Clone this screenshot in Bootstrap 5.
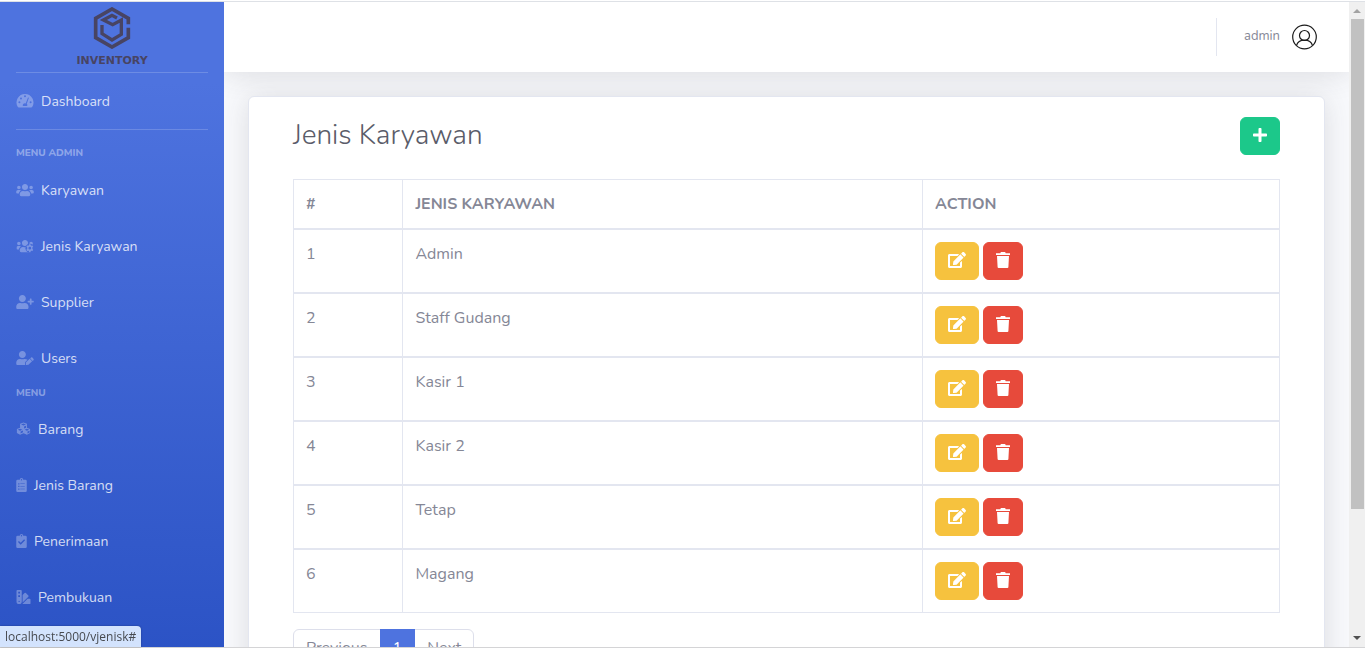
<!DOCTYPE html>
<html lang="id">
<head>
<meta charset="utf-8">
<meta name="viewport" content="width=device-width, initial-scale=1">
<title>Inventory - Jenis Karyawan</title>
<link href="https://cdn.jsdelivr.net/npm/bootstrap@5.3.0/dist/css/bootstrap.min.css" rel="stylesheet">
<style>
  body { font-family: Nunito, "Open Sans", sans-serif; color: #858796; background: #fff; }
  .app-shell { border-top: 1px solid #dee1e6; margin-top: 1px; height: calc(100vh - 1px); border-bottom: 1px solid #d4d4d6; }
  .side-panel { width: 224px; background: linear-gradient(180deg, #4e73df 10%, #224abe 100%) 0 0 / 100% 806px no-repeat #224abe; }
  .brand { height: 70px; padding-top: 5px; color: #484463; }
  .brand:hover { color: #484463; }
  .brand-name { font: bold 11px/12px "DejaVu Sans", sans-serif; margin-top: 6px; }
  .side-line { height: 1px; margin: 0 16px; background: rgba(255,255,255,.18); }
  .side-title { font-size: 10px; line-height: 15px; font-weight: 800; color: rgba(255,255,255,.4); padding: 0 16px; text-transform: uppercase; }
  .side-group { padding-top: 1px; }
  .side-link { display: flex; align-items: center; gap: 7px; height: 56px; padding: 0 16px; font-size: 14px; color: rgba(255,255,255,.8); text-decoration: none; }
  .side-link:hover { color: #fff; }
  .side-link svg { height: 14px; fill: rgba(255,255,255,.3); flex: none; }
  .top-bar { height: 70px; background: #fff; box-shadow: 0 2px 28px rgba(58,59,69,.15); padding-right: 32px; }
  .top-split { width: 1px; height: 38px; background: #e3e6f0; margin-right: 27px; }
  .user-link { font-size: 13px; color: #858796; text-decoration: none; gap: 12px; }
  .work-area { background: #f8f9fc; min-width: 0; }
  .panel { border: 1px solid #e3e6f0; border-radius: 6px; box-shadow: 0 2px 28px rgba(58,59,69,.15); padding: 20px 44px; margin: 24px; background: #fff; }
  .panel h1 { font-size: 28px; line-height: 36px; font-weight: 300; color: #5a5c69; }
  .grid-table { width: 100%; table-layout: fixed; border-collapse: separate; border-spacing: 0; border-right: 1px solid #e3e6f0; margin-bottom: 16px; }
  .grid-table th, .grid-table td { border: 1px solid #e3e6f0; border-right: 0; padding: 12px; vertical-align: top; line-height: 24px; }
  .grid-table td { height: 64px; }
  .btn { height: 38px; border: 1px solid; border-radius: 6px; padding: 0 12px 2px; display: flex; align-items: center; }
  .btn svg { fill: #fff; height: 16px; }
  .btn-add { background: #1cc88a; border-color: #1cc88a; }
  .btn-edit { background: #f6c23e; border-color: #f6c23e; }
  .btn-del { background: #e74a3b; border-color: #e74a3b; }
  .page-link { color: #858796; border-color: #dddfeb; }
  .active > .page-link { background: #4e73df; border-color: #4e73df; }
  .scroll-track { width: 16px; background: #f0f0f0; padding-right: 1px; }
  .scroll-track svg { width: 14px; height: 16px; }
  .scroll-thumb { width: 13px; height: 76%; background: #c1c1c1; margin-left: 2px; margin-top: 1px; }
  .link-status { position: fixed; left: 0; bottom: 1px; height: 21px; padding: 0 5px; background: #d3e3fd; color: #474a50; font: 12px/21px "Open Sans", sans-serif; border-radius: 0 4px 0 0; box-shadow: 0 0 2px rgba(0,0,0,.35); }
</style>
</head>
<body class="overflow-hidden">
<svg class="position-absolute" width="0" height="0" aria-hidden="true">
  <symbol id="i-gauge" viewBox="0 0 18 14"><path fill-rule="evenodd" d="M9 0a8.5 8.5 0 0 0-7.300 12.800q.4.7 1.100.7h12.400q.7 0 1.100-.7A8.500 8.500 0 0 0 9 0ZM9 1.300a1 1 0 1 1 0 2 1 1 0 0 1 0-2ZM3.400 7.300a1 1 0 1 1 0 2 1 1 0 0 1 0-2ZM5 3.500a1 1 0 1 1 0 2 1 1 0 0 1 0-2ZM14.600 7.300a1 1 0 1 1 0 2 1 1 0 0 1 0-2ZM12 3.400l.9.400-2.100 6a2 2 0 0 1 .3 2.200H6.900a2.100 2.100 0 0 1 2.800-2.600Z"/></symbol>
  <symbol id="i-users" viewBox="0 0 640 512"><path d="M96 224c35.300 0 64-28.700 64-64s-28.700-64-64-64-64 28.700-64 64 28.700 64 64 64zm448 0c35.300 0 64-28.700 64-64s-28.700-64-64-64-64 28.700-64 64 28.700 64 64 64zm32 32h-64c-17.600 0-33.500 7.100-45.100 18.600 40.300 22.100 68.900 62 75.100 109.400h66c17.700 0 32-14.300 32-32v-32c0-35.300-28.700-64-64-64zm-256 0c61.900 0 112-50.100 112-112S381.900 32 320 32 208 82.100 208 144s50.100 112 112 112zm76.800 32h-8.300c-20.800 10-43.900 16-68.500 16s-47.600-6-68.500-16h-8.300C179.600 288 128 339.600 128 403.200V432c0 26.500 21.500 48 48 48h288c26.500 0 48-21.500 48-48v-28.800c0-63.600-51.600-115.200-115.200-115.200zm-223.700-13.400C161.500 263.100 145.600 256 128 256H64c-35.300 0-64 28.700-64 64v32c0 17.700 14.300 32 32 32h65.900c6.300-47.400 34.900-87.300 75.200-109.400z"/></symbol>
  <mask id="m-gear" maskUnits="userSpaceOnUse" x="0" y="0" width="640" height="512"><path fill="#fff" d="M0 0h640v512H0z"/><circle cx="496" cy="336" r="160" fill="#000"/></mask>
  <symbol id="i-users-gear" viewBox="0 0 640 512"><path mask="url(#m-gear)" d="M96 224c35 0 64-29 64-64s-29-64-64-64-64 29-64 64 29 64 64 64zm448 0c35 0 64-29 64-64s-29-64-64-64-64 29-64 64 29 64 64 64zM320 256c62 0 112-50 112-112S382 32 320 32 208 82 208 144s50 112 112 112zM128 403v29c0 26 21 48 48 48h288V288h-75q-69 32-138 0h-8c-64 0-115 52-115 115zM173 275c-12-12-27-19-45-19H64c-35 0-64 29-64 64v32c0 18 14 32 32 32h66c6-47 35-87 75-109z"/><path fill-rule="evenodd" d="m470 192h52l8 38 28 16 37-12 26 45-29 26v62l29 26-26 45-37-12-28 16-8 38h-52l-8-38-28-16-37 12-26-45 29-26v-62l-29-26 26-45 37 12 28-16Zm26 94a50 50 0 1 0 0 100 50 50 0 0 0 0-100Z"/></symbol>
  <symbol id="i-user-plus" viewBox="0 0 640 512"><path d="M624 208h-64v-64c0-8.800-7.200-16-16-16h-32c-8.800 0-16 7.200-16 16v64h-64c-8.800 0-16 7.200-16 16v32c0 8.800 7.200 16 16 16h64v64c0 8.800 7.200 16 16 16h32c8.800 0 16-7.200 16-16v-64h64c8.800 0 16-7.200 16-16v-32c0-8.800-7.200-16-16-16zM224 256c70.700 0 128-57.300 128-128S294.700 0 224 0 96 57.300 96 128s57.300 128 128 128zm89.600 32h-16.700c-22.200 10.200-46.900 16-72.900 16s-50.600-5.800-72.900-16h-16.700C60.200 288 0 348.200 0 422.400V464c0 26.500 21.500 48 48 48h352c26.500 0 48-21.500 48-48v-41.600c0-74.200-60.200-134.400-134.400-134.400z"/></symbol>
  <symbol id="i-user-edit" viewBox="0 0 640 512"><path d="M224 256c70.700 0 128-57.300 128-128S294.700 0 224 0 96 57.300 96 128s57.300 128 128 128zm90 32h-17q-73 33-146 0h-17C60 288 0 348 0 422v42c0 26 21 48 48 48h279q-8-12-6-29l9-82 84-83q-42-30-100-30zM358 413l-8 79q0 20 18 20l79-9 131-130-90-90zM628 279l-48-47q-12-12-26 0l-44 44 90 90 28-28q24-30 0-59z"/></symbol>
  <symbol id="i-cubes" viewBox="0 0 512 512"><path fill-rule="evenodd" d="M256 16 130 60v150L14 256v144l116 64 126-56 126 56 116-64V256l-116-46V60ZM166 91l90-33 90 33-90 36ZM276 161l72-28v76l-72 30ZM48 281l82-33 84 33-84 35ZM150 351l86-36v64l-86 38ZM298 281l84-33 82 33-82 35ZM402 351l76-34v66l-76 40Z"/></symbol>
  <symbol id="i-list" viewBox="0 0 384 512"><path fill-rule="evenodd" d="M336 64h-80a64 64 0 0 0-128 0H48Q0 64 0 112v352q0 48 48 48h288q48 0 48-48V112q0-48-48-48ZM192 40a24 24 0 1 1 0 48 24 24 0 0 1 0-48ZM72 190h44v44H72ZM148 202h164v20H148ZM72 286h44v44H72ZM148 298h164v20H148ZM72 382h44v44H72ZM148 394h164v20H148Z"/></symbol>
  <symbol id="i-check" viewBox="0 0 384 512"><path fill-rule="evenodd" d="M336 64h-80a64 64 0 0 0-128 0H48Q0 64 0 112v352q0 48 48 48h288q48 0 48-48V112q0-48-48-48ZM192 40a24 24 0 1 1 0 48 24 24 0 0 1 0-48ZM64 290l34-34 65 64 125-124 34 34-159 160Z"/></symbol>
  <symbol id="i-swatch" viewBox="0 0 512 512"><path fill-rule="evenodd" d="M32 0h128q32 0 32 32v384a96 96 0 0 1-192 0V32Q0 0 32 0ZM64 64v64h64V64ZM64 192v64h64v-64ZM96 392a24 24 0 1 0 0 48 24 24 0 0 0 0-48ZM224 185l73-73q22-22 45 0l91 91q22 22 0 45L223 458ZM480 320q32 0 32 32v128q0 32-32 32H214l192-192Z"/></symbol>
  <symbol id="i-plus" viewBox="0 0 448 512"><path d="M416 208H272V64c0-17.670-14.330-32-32-32h-32c-17.670 0-32 14.330-32 32v144H32c-17.670 0-32 14.330-32 32v32c0 17.670 14.330 32 32 32h144v144c0 17.670 14.330 32 32 32h32c17.670 0 32-14.330 32-32V304h144c17.670 0 32-14.330 32-32v-32c0-17.670-14.330-32-32-32z"/></symbol>
  <symbol id="i-edit" viewBox="0 0 576 512"><path d="M402.600 83.200l90.200 90.200c3.800 3.800 3.800 10 0 13.800L274.400 405.600l-92.800 10.300c-12.400 1.400-22.900-9.100-21.500-21.500l10.300-92.800L388.800 83.200c3.800-3.800 10-3.800 13.800 0zm162-22.900l-48.800-48.800c-15.200-15.200-39.900-15.200-55.200 0l-35.400 35.400c-3.800 3.800-3.800 10 0 13.800l90.200 90.200c3.800 3.800 10 3.800 13.800 0l35.400-35.400c15.200-15.300 15.200-40 0-55.200zM384 346.200V448H64V128h229.800c3.200 0 6.200-1.300 8.500-3.500l40-40c7.600-7.600 2.200-20.500-8.500-20.500H48C21.500 64 0 85.500 0 112v352c0 26.500 21.500 48 48 48h352c26.500 0 48-21.500 48-48V306.200c0-10.700-12.900-16-20.500-8.500l-40 40c-2.200 2.300-3.500 5.300-3.500 8.500z"/></symbol>
  <symbol id="i-trash" viewBox="0 0 14 16"><path d="M0 1.200h4.300L4.700.3Q4.800 0 5.200 0h3.600q.4 0 .5.300l.4.900H14V3H0ZM1 4h12l-.6 11q0 1-1 1H2.600q-1 0-1-1Z"/></symbol>
</svg>

<div class="app-shell d-flex overflow-hidden">
  <nav class="side-panel flex-shrink-0 overflow-hidden" aria-label="Menu utama">
    <a href="#" class="brand d-flex flex-column align-items-center text-decoration-none">
      <svg width="38" height="42" viewBox="82 16 112 126" fill="none" stroke="currentColor" stroke-width="11" aria-hidden="true"><path d="M187 68V50L138 22 89 50v58l49 28 49-28V78"/><path d="m153 49-15-8-26 14 28 14 26-14v43l-28 17-30-19V70" stroke-width="10"/></svg>
      <span class="brand-name">INVENTORY</span>
    </a>
    <div class="side-line"></div>
    <a class="side-link" href="#"><svg width="18"><use href="#i-gauge"/></svg>Dashboard</a>
    <div class="side-line"></div>
    <div class="side-title pt-3">Menu Admin</div>
    <div class="side-group">
      <a class="side-link" href="#"><svg width="18"><use href="#i-users"/></svg>Karyawan</a>
      <a class="side-link" href="#"><svg width="18"><use href="#i-users-gear"/></svg>Jenis Karyawan</a>
      <a class="side-link" href="#"><svg width="18"><use href="#i-user-plus"/></svg>Supplier</a>
      <a class="side-link" href="#"><svg width="18"><use href="#i-user-edit"/></svg>Users</a>
    </div>
    <div class="side-title">Menu</div>
    <a class="side-link" href="#"><svg width="15"><use href="#i-cubes"/></svg>Barang</a>
    <a class="side-link" href="#"><svg width="11"><use href="#i-list"/></svg>Jenis Barang</a>
    <a class="side-link" href="#"><svg width="11"><use href="#i-check"/></svg>Penerimaan</a>
    <a class="side-link" href="#"><svg width="15"><use href="#i-swatch"/></svg>Pembukuan</a>
  </nav>

  <div class="work-area flex-grow-1 overflow-hidden">
    <header class="top-bar d-flex justify-content-end align-items-center">
      <div class="top-split"></div>
      <a href="#" class="user-link d-flex align-items-center"><span>admin</span>
        <svg width="25" height="26" viewBox="0 0 25 26" fill="none" stroke="#1c1c1c" stroke-width="1.200" role="img" aria-label="Profil"><circle cx="12.500" cy="13" r="11.800"/><circle cx="12.500" cy="11.500" r="5"/><path d="M4.500 21.500c1-3.500 4-5.300 8-5.300s7 1.800 8 5.300"/></svg></a>
    </header>
    <main class="panel">
      <div class="d-flex justify-content-between align-items-start mb-4">
        <h1 class="m-0">Jenis Karyawan</h1>
        <button type="button" class="btn btn-add" aria-label="Tambah"><svg width="14"><use href="#i-plus"/></svg></button>
      </div>
      <table class="grid-table">
        <colgroup><col style="width:11.100%"><col style="width:52.700%"><col></colgroup>
        <thead><tr><th scope="col">#</th><th scope="col">JENIS KARYAWAN</th><th scope="col">ACTION</th></tr></thead>
        <tbody>
          <tr><td>1</td><td>Admin</td><td><div class="d-flex gap-1"><button type="button" class="btn btn-edit" aria-label="Ubah Admin"><svg width="18"><use href="#i-edit"/></svg></button><button type="button" class="btn btn-del" aria-label="Hapus Admin"><svg width="14"><use href="#i-trash"/></svg></button></div></td></tr>
          <tr><td>2</td><td>Staff Gudang</td><td><div class="d-flex gap-1"><button type="button" class="btn btn-edit" aria-label="Ubah Staff Gudang"><svg width="18"><use href="#i-edit"/></svg></button><button type="button" class="btn btn-del" aria-label="Hapus Staff Gudang"><svg width="14"><use href="#i-trash"/></svg></button></div></td></tr>
          <tr><td>3</td><td>Kasir 1</td><td><div class="d-flex gap-1"><button type="button" class="btn btn-edit" aria-label="Ubah Kasir 1"><svg width="18"><use href="#i-edit"/></svg></button><button type="button" class="btn btn-del" aria-label="Hapus Kasir 1"><svg width="14"><use href="#i-trash"/></svg></button></div></td></tr>
          <tr><td>4</td><td>Kasir 2</td><td><div class="d-flex gap-1"><button type="button" class="btn btn-edit" aria-label="Ubah Kasir 2"><svg width="18"><use href="#i-edit"/></svg></button><button type="button" class="btn btn-del" aria-label="Hapus Kasir 2"><svg width="14"><use href="#i-trash"/></svg></button></div></td></tr>
          <tr><td>5</td><td>Tetap</td><td><div class="d-flex gap-1"><button type="button" class="btn btn-edit" aria-label="Ubah Tetap"><svg width="18"><use href="#i-edit"/></svg></button><button type="button" class="btn btn-del" aria-label="Hapus Tetap"><svg width="14"><use href="#i-trash"/></svg></button></div></td></tr>
          <tr><td>6</td><td>Magang</td><td><div class="d-flex gap-1"><button type="button" class="btn btn-edit" aria-label="Ubah Magang"><svg width="18"><use href="#i-edit"/></svg></button><button type="button" class="btn btn-del" aria-label="Hapus Magang"><svg width="14"><use href="#i-trash"/></svg></button></div></td></tr>
        </tbody>
      </table>
      <nav aria-label="Halaman"><ul class="pagination">
        <li class="page-item"><a class="page-link" href="#">Previous</a></li>
        <li class="page-item active"><a class="page-link" href="#" aria-current="page">1</a></li>
        <li class="page-item"><a class="page-link" href="#">Next</a></li>
      </ul></nav>
    </main>
  </div>

  <div class="scroll-track flex-shrink-0 d-flex flex-column" aria-hidden="true">
    <svg class="ms-auto flex-shrink-0" viewBox="0 0 14 16"><path d="M7 7l4 4H3z" fill="#a3a3a3"/></svg>
    <div class="scroll-thumb"></div>
    <svg class="ms-auto mt-auto flex-shrink-0" viewBox="0 0 14 16"><path d="M3 5h8L7 9z" fill="#505050"/></svg>
  </div>
</div>
<div class="link-status">localhost:5000/vjenisk#</div>
<script src="https://cdn.jsdelivr.net/npm/bootstrap@5.3.0/dist/js/bootstrap.bundle.min.js"></script>
</body>
</html>
